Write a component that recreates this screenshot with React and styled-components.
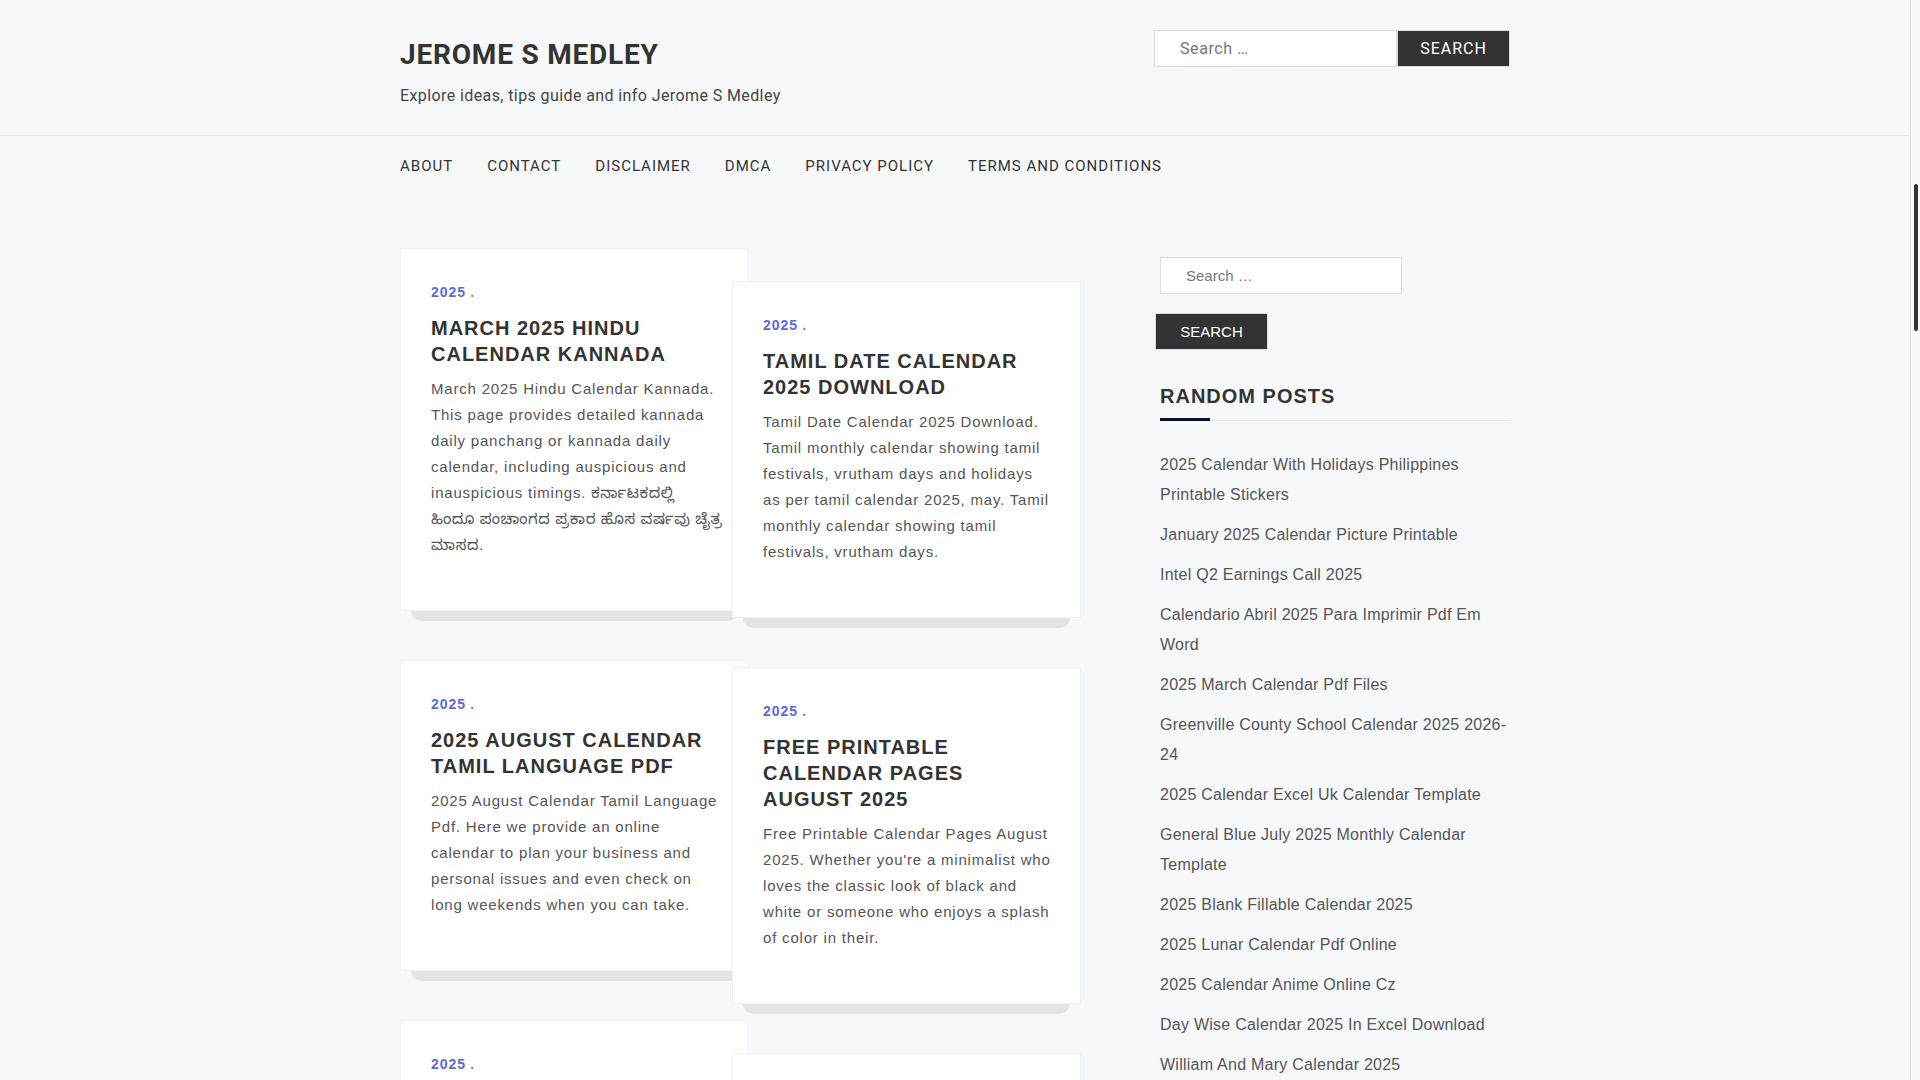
import React from 'react';
import styled, { createGlobalStyle } from 'styled-components';

const GlobalStyle = createGlobalStyle`
  * { box-sizing: border-box; }
  html { scrollbar-width: none; }
  html, body { background: #f7f8fa; }
  ::-webkit-scrollbar { display: none; }
  body {
    margin: 0;
    font-family: "Liberation Sans", Arial, sans-serif;
    color: #555;
  }
`;

const Page = styled.div`
  padding-right: 10px;
`;

const ScrollRail = styled.div`
  position: fixed;
  top: 0;
  right: 0;
  width: 10px;
  height: 100vh;
  background: #f7f8fa;
  border-left: 1px solid #e3e5e8;
`;

const ScrollThumb = styled.div`
  position: absolute;
  top: 184px;
  left: 3px;
  width: 4px;
  height: 147px;
  background: #333;
  border-radius: 2px;
`;

const Container = styled.div`
  width: 1110px;
  margin: 0 auto;
`;

const HeaderTop = styled.header`
  border-bottom: 1px solid #e6e8eb;
`;

const HeaderInner = styled(Container)`
  display: flex;
  justify-content: space-between;
  align-items: flex-start;
  padding: 30px 0 27px;
`;

const Branding = styled.div`
  padding-top: 8px;
`;

const SiteTitle = styled.h1`
  margin: 0;
  font-family: Roboto, "Liberation Sans", sans-serif;
  font-weight: 700;
  font-size: 28px;
  line-height: 1.2;
  letter-spacing: 0.8px;
  color: #333;
`;

const Tagline = styled.p`
  margin: 12px 0 0;
  font-family: Roboto, "Liberation Sans", sans-serif;
  font-size: 16px;
  line-height: 24px;
  letter-spacing: 0.4px;
  color: #444;
`;

const SearchForm = styled.form`
  display: flex;
  flex-direction: ${p => (p.$stacked ? 'column' : 'row')};
  align-items: flex-start;
  gap: ${p => (p.$stacked ? '19px' : '0')};
`;

const SearchInput = styled.input`
  width: ${p => p.$width}px;
  height: 37px;
  margin: 0;
  padding: 0 25px;
  background: #fff;
  border: 1px solid #dcdcdc;
  border-radius: 0;
  outline: none;
  font-family: ${p => (p.$roboto ? 'Roboto, "Liberation Sans", sans-serif' : '"Liberation Sans", Arial, sans-serif')};
  font-size: ${p => (p.$roboto ? '16px' : '15px')};
  letter-spacing: ${p => (p.$roboto ? '0.6px' : '0')};
  color: #555;
  &::placeholder { color: #777; }
`;

const SearchButton = styled.button`
  width: 113px;
  height: 37px;
  margin: 0 0 0 ${p => p.$shift || 0}px;
  padding: 0;
  background: #333;
  border: 1px solid #dcdcdc;
  border-radius: 0;
  color: #fff;
  text-transform: uppercase;
  font-family: ${p => (p.$roboto ? 'Roboto, "Liberation Sans", sans-serif' : '"Liberation Sans", Arial, sans-serif')};
  font-size: ${p => (p.$roboto ? '16px' : '15px')};
  letter-spacing: ${p => (p.$roboto ? '1px' : '0')};
  cursor: pointer;
`;

const Nav = styled.nav`
  height: 60px;
`;

const NavList = styled(Container)`
  display: flex;
  align-items: center;
  height: 60px;
`;

const NavItem = styled.a`
  margin-right: 34px;
  font-family: Roboto, "Liberation Sans", sans-serif;
  font-size: 15px;
  letter-spacing: 1px;
  text-transform: uppercase;
  color: #333;
  text-decoration: none;
`;

const Main = styled(Container)`
  display: flex;
  align-items: flex-start;
  padding: 52px 0 60px;
`;

const Posts = styled.div`
  display: flex;
  align-items: flex-start;
`;

const Column = styled.div`
  width: 349px;
  display: flex;
  flex-direction: column;
  gap: 49px;
  margin-left: ${p => (p.$second ? '-17px' : '0')};
  padding-top: ${p => (p.$second ? '33px' : '0')};
`;

const Card = styled.article`
  position: relative;
  background: #fff;
  border: 1px solid #edf2f7;
  padding: 30px 25px 52px 30px;
  &::after {
    content: '';
    position: absolute;
    left: 10px;
    right: 10px;
    bottom: -11px;
    height: 10px;
    background: #e3e4e6;
    border-radius: 0 0 10px 10px;
  }
`;

const Meta = styled.div`
  line-height: 26px;
  font-size: 14px;
`;

const Category = styled.a`
  font-weight: 700;
  letter-spacing: 1px;
  color: #5b6bd9;
  text-decoration: none;
`;

const Sep = styled.span`
  margin-left: 4px;
  font-weight: 700;
  color: #888;
`;

const PostTitle = styled.h2`
  margin: 10px 0 0;
  font-family: "Liberation Sans", Arial, sans-serif;
  font-weight: 700;
  font-size: 20px;
  line-height: 26px;
  letter-spacing: 1px;
  text-transform: uppercase;
  color: #333;
`;

const Excerpt = styled.p`
  margin: 9px 0 0;
  font-family: "Liberation Sans", Arial, "Noto Sans Kannada", "Noto Sans", sans-serif;
  font-size: 15px;
  line-height: 26px;
  letter-spacing: 0.8px;
  color: #555;
`;

const Native = styled.span`
  letter-spacing: 0.6px;
  line-height: 1;
`;

const Sidebar = styled.aside`
  width: 350px;
  margin-left: auto;
  padding-top: 9px;
`;

const WidgetTitle = styled.h3`
  position: relative;
  margin: 33px 0 0;
  padding-bottom: 11px;
  border-bottom: 1px solid #e5e6e8;
  font-family: "Liberation Sans", Arial, sans-serif;
  font-weight: 700;
  font-size: 20px;
  line-height: 26px;
  letter-spacing: 1px;
  text-transform: uppercase;
  color: #333;
  &::after {
    content: '';
    position: absolute;
    left: 0;
    bottom: -1px;
    width: 50px;
    height: 3px;
    background: #0b1033;
  }
`;

const PostList = styled.ul`
  list-style: none;
  margin: 29px 0 0;
  padding: 0;
`;

const PostListItem = styled.li`
  padding-bottom: 10px;
  font-size: 16px;
  line-height: 30px;
  letter-spacing: 0.25px;
  a { color: #555; text-decoration: none; }
`;

const navItems = ['About', 'Contact', 'Disclaimer', 'DMCA', 'Privacy Policy', 'Terms and Conditions'];

const randomPosts = [
  '2025 Calendar With Holidays Philippines Printable Stickers',
  'January 2025 Calendar Picture Printable',
  'Intel Q2 Earnings Call 2025',
  'Calendario Abril 2025 Para Imprimir Pdf Em Word',
  '2025 March Calendar Pdf Files',
  'Greenville County School Calendar 2025 2026-24',
  '2025 Calendar Excel Uk Calendar Template',
  'General Blue July 2025 Monthly Calendar Template',
  '2025 Blank Fillable Calendar 2025',
  '2025 Lunar Calendar Pdf Online',
  '2025 Calendar Anime Online Cz',
  'Day Wise Calendar 2025 In Excel Download',
  'William And Mary Calendar 2025',
];

const mainPosts = [
  {
    title: 'March 2025 Hindu Calendar Kannada',
    excerpt:
      'March 2025 Hindu Calendar Kannada. This page provides detailed kannada daily panchang or kannada daily calendar, including auspicious and inauspicious timings.',
    native: ' ಕರ್ನಾಟಕದಲ್ಲಿ ಹಿಂದೂ ಪಂಚಾಂಗದ ಪ್ರಕಾರ ಹೊಸ ವರ್ಷವು ಚೈತ್ರ ಮಾಸದ.',
  },
  {
    title: 'Tamil Date Calendar 2025 Download',
    excerpt:
      'Tamil Date Calendar 2025 Download. Tamil monthly calendar showing tamil festivals, vrutham days and holidays as per tamil calendar 2025, may. Tamil monthly calendar showing tamil festivals, vrutham days.',
  },
  {
    title: '2025 August Calendar Tamil Language Pdf',
    excerpt:
      '2025 August Calendar Tamil Language Pdf. Here we provide an online calendar to plan your business and personal issues and even check on long weekends when you can take.',
  },
  {
    title: 'Free Printable Calendar Pages August 2025',
    excerpt:
      "Free Printable Calendar Pages August 2025. Whether you're a minimalist who loves the classic look of black and white or someone who enjoys a splash of color in their.",
  },
];

const extraPosts = [...randomPosts, ...randomPosts].slice(0, 28).map(t => ({
  title: t,
  excerpt: `${t}. Plan your year with this free printable calendar, with holidays, observances and important dates you can download and print.`,
}));

const allPosts = [...mainPosts, ...extraPosts];

function PostCard({ post }) {
  return (
    <Card>
      <Meta>
        <Category href="#">2025</Category>
        <Sep>.</Sep>
      </Meta>
      <PostTitle>{post.title}</PostTitle>
      <Excerpt>
        {post.excerpt}
        {post.native && <Native>{post.native}</Native>}
      </Excerpt>
    </Card>
  );
}

export default function App() {
  const left = allPosts.filter((_, i) => i % 2 === 0);
  const right = allPosts.filter((_, i) => i % 2 === 1);
  return (
    <Page>
      <GlobalStyle />
      <HeaderTop>
        <HeaderInner>
          <Branding>
            <SiteTitle>JEROME S MEDLEY</SiteTitle>
            <Tagline>Explore ideas, tips guide and info Jerome S Medley</Tagline>
          </Branding>
          <SearchForm onSubmit={e => e.preventDefault()}>
            <SearchInput $roboto $width={243} placeholder="Search …" />
            <SearchButton $roboto type="submit">Search</SearchButton>
          </SearchForm>
        </HeaderInner>
      </HeaderTop>
      <Nav>
        <NavList>
          {navItems.map(n => (
            <NavItem key={n} href="#">{n}</NavItem>
          ))}
        </NavList>
      </Nav>
      <Main>
        <Posts>
          <Column>
            {left.map((p, i) => <PostCard key={i} post={p} />)}
          </Column>
          <Column $second>
            {right.map((p, i) => <PostCard key={i} post={p} />)}
          </Column>
        </Posts>
        <Sidebar>
          <SearchForm $stacked onSubmit={e => e.preventDefault()}>
            <SearchInput $width={242} placeholder="Search …" />
            <SearchButton $shift={-5} type="submit">Search</SearchButton>
          </SearchForm>
          <WidgetTitle>Random Posts</WidgetTitle>
          <PostList>
            {randomPosts.map(t => (
              <PostListItem key={t}><a href="#">{t}</a></PostListItem>
            ))}
          </PostList>
        </Sidebar>
      </Main>
      <ScrollRail>
        <ScrollThumb />
      </ScrollRail>
    </Page>
  );
}
